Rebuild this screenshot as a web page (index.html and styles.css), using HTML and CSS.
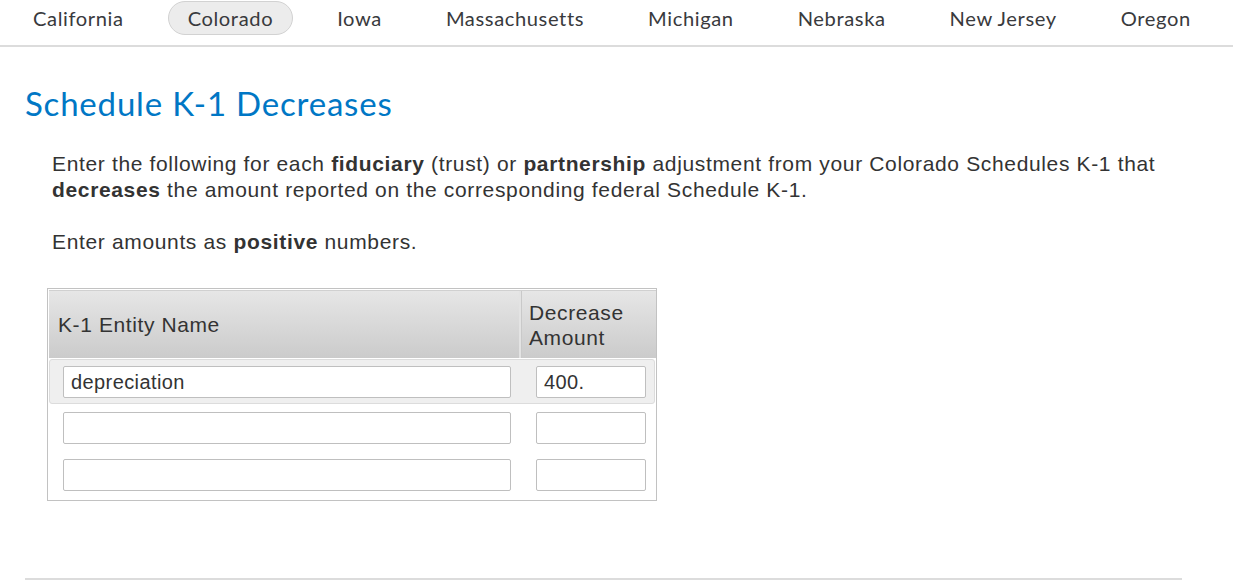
FILE: index.html
```html
<!DOCTYPE html>
<html>
<head>
<meta charset="utf-8">
<link rel="stylesheet" href="styles.css">
</head>
<body>
<nav class="tabs">
  <span class="tab">California</span>
  <span class="tab active">Colorado</span>
  <span class="tab">Iowa</span>
  <span class="tab">Massachusetts</span>
  <span class="tab">Michigan</span>
  <span class="tab">Nebraska</span>
  <span class="tab">New Jersey</span>
  <span class="tab">Oregon</span>
</nav>
<main class="content">
  <h1 class="title">Schedule K-1 Decreases</h1>
  <div class="intro">
    <p>Enter the following for each <b>fiduciary</b> (trust) or <b>partnership</b> adjustment from your Colorado Schedules K-1 that <b>decreases</b> the amount reported on the corresponding federal Schedule K-1.</p>
    <p>Enter amounts as <b>positive</b> numbers.</p>
  </div>
  <div class="grid">
    <div class="head">
      <div class="hcell name">K-1 Entity Name</div>
      <div class="hcell amt">Decrease<br>Amount</div>
    </div>
    <div class="row selected">
      <div class="field wide">depreciation</div>
      <div class="field small">400.</div>
    </div>
    <div class="row">
      <div class="field wide"></div>
      <div class="field small"></div>
    </div>
    <div class="row">
      <div class="field wide"></div>
      <div class="field small"></div>
    </div>
  </div>
  <hr class="rule">
</main>
</body>
</html>
```
FILE: styles.css
```css
html, body { margin: 0; padding: 0; background: #fff; }
body { width: 1233px; height: 580px; overflow: hidden; }
.tabs {
  display: flex;
  align-items: flex-start;
  gap: 24px;
  border-bottom: 2px solid #dcdcdc;
  box-sizing: border-box;
  height: 47px;
  padding: 1px 0 0 13px;
  font-family: Lato, "Noto Sans", sans-serif;
  font-size: 20.15px;
  letter-spacing: 0.6px;
  color: #393a3d;
}
.tab {
  display: inline-block;
  padding: 5px 19px;
  line-height: 22px;
  border: 1px solid transparent;
  border-radius: 18px;
}
.tab.active { background: #ececec; border-color: #d2d2d2; }
.content { padding: 0 0 0 25px; }
.title {
  margin: 37px 0 0 0;
  font-family: Lato, "Noto Sans", sans-serif;
  font-weight: 400;
  font-size: 33px;
  letter-spacing: 0.8px;
  line-height: 38px;
  color: #0077c5;
}
.intro {
  margin: 29px 0 0 27px;
  width: 1160px;
  font-family: "Liberation Sans", Arial, sans-serif;
  font-size: 21px;
  letter-spacing: 0.65px;
  line-height: 26px;
  color: #333;
}
.intro p { margin: 0 0 26px 0; }
.grid {
  margin: 33px 0 0 22px;
  width: 610px;
  box-sizing: border-box;
  border: 1px solid #c2c2c2;
  padding: 1px 0 2px 1px;
  font-family: "Liberation Sans", Arial, sans-serif;
  font-size: 21px;
  letter-spacing: 0.6px;
  color: #333;
}
.head {
  display: flex;
  height: 68px;
  background: linear-gradient(#e6e6e6, #cbcbcb);
  border-top: 1px solid #d0d0d0;
  box-sizing: border-box;
}
.hcell { display: flex; align-items: center; line-height: 25px; }
.name { width: 472px; padding-left: 9px; box-sizing: border-box; border-right: 2px solid #e3e3e3; box-shadow: 1px 0 0 #c9c9c9; }
.amt { padding-left: 8px; }
.row {
  display: flex;
  align-items: center;
  height: 47px;
  padding-left: 14px;
  box-sizing: border-box;
}
.row.selected {
  height: 45px;
  margin-top: 1px;
  margin-right: 1px;
  background: #efefef;
  border: 1px solid #dcdcdc;
  border-radius: 3px;
  padding-left: 13px;
}
.field {
  height: 32px;
  box-sizing: border-box;
  border: 1px solid #bfbfbf;
  border-radius: 2px;
  background: #fff;
  padding-left: 7px;
  line-height: 30px;
  font-size: 20px;
  letter-spacing: 0.4px;
}
.wide { width: 448px; }
.small { width: 110px; margin-left: 25px; }
.rule {
  margin: 77px 0 0 0;
  width: 1157px;
  border: 0;
  height: 2px;
  background: #dcdcdc;
}
```
